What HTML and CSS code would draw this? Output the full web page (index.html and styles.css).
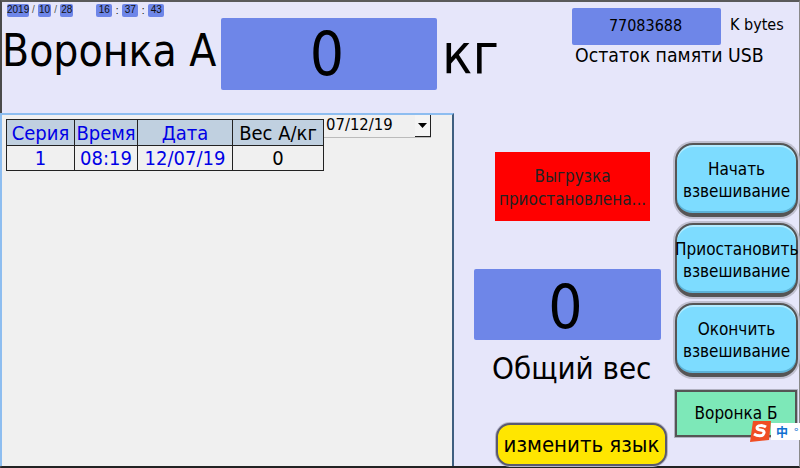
FILE: index.html
```html
<!DOCTYPE html>
<html lang="ru">
<head>
<meta charset="utf-8">
<title>Воронка А</title>
<link rel="stylesheet" href="styles.css">
</head>
<body>
<div class="screen">
  <header class="top">
    <div class="top-left">
      <div class="clock">
        <span class="tick y">2019</span><span class="sep">/</span><span class="tick">10</span><span class="sep">/</span><span class="tick">28</span>
        <span class="tick t1">16</span><span class="sep c">:</span><span class="tick">37</span><span class="sep c">:</span><span class="tick">43</span>
      </div>
      <div class="hopper">
        <span class="hopper-name">Воронка А</span>
        <span class="value-box big">0</span>
        <span class="unit">кг</span>
      </div>
    </div>
    <div class="usb">
      <div class="usb-row"><span class="usb-value">77083688</span><span class="usb-unit">K bytes</span></div>
      <div class="usb-label">Остаток памяти USB</div>
    </div>
  </header>
  <main class="bottom">
    <section class="panel">
      <table class="log">
        <thead>
          <tr><th class="c1">Серия</th><th class="c2">Время</th><th class="c3">Дата</th><th class="c4">Вес А/кг</th></tr>
        </thead>
        <tbody>
          <tr><td>1</td><td>08:19</td><td>12/07/19</td><td class="black">0</td></tr>
        </tbody>
      </table>
      <div class="combo"><span class="combo-text">07/12/19</span><span class="combo-btn"><svg width="9" height="5" viewBox="0 0 9 5"><path d="M0 0h9L4.500 5z" fill="#000"/></svg></span></div>
    </section>
    <section class="status">
      <div class="alert">Выгрузка приостановлена...</div>
      <div class="value-box total">0</div>
      <div class="total-label">Общий вес</div>
      <button class="btn lang">изменить язык</button>
    </section>
    <nav class="actions">
      <button class="btn action">Начать<br>взвешивание</button>
      <button class="btn action wide">Приостановить<br>взвешивание</button>
      <button class="btn action">Окончить<br>взвешивание</button>
      <button class="switch">Воронка Б</button>
    </nav>
  </main>
  <div class="ime">
    <svg class="ime-logo" width="21" height="21" viewBox="0 0 21 21"><path d="M3 0h18l-2 19-19 2z" fill="#f04e23"/><path d="M16 6c-3-2-9-2-9 1s8 1 7 5-7 3-10 1" fill="none" stroke="#fff" stroke-width="3"/></svg>
    <span class="ime-zh">中<span class="ime-dot">°</span></span>
  </div>
</div>
</body>
</html>
```

FILE: styles.css
```css
* { box-sizing: border-box; }
html, body { margin: 0; padding: 0; }
body { width: 800px; height: 468px; overflow: hidden; font-family: "DejaVu Sans", sans-serif; font-stretch: condensed; color: #000; }
.screen { position: relative; width: 800px; height: 468px; background: #e6e6fa; border-top: 2px solid #5a5a5a; border-left: 2px solid #4a4a4a; border-bottom: 2px solid #222; border-right: 1px solid #8a8a8a; display: flex; flex-direction: column; }
.top { height: 111px; display: flex; flex: none; }
.top-left { width: 570px; }
.clock { height: 14px; padding: 2px 0 0 5px; display: flex; align-items: flex-start; font-family: "Liberation Sans", sans-serif; font-stretch: normal; font-size: 10px; line-height: 12px; color: #111; }
.tick { background: #6e86e8; border-radius: 2px; height: 13px; padding: 0 1px; text-align: center; min-width: 11px; }
.tick.y { width: 22px; padding: 0; }
.tick.t1 { margin-left: 23px; }
.tick.t1, .tick.t1 ~ .tick { min-width: 16px; }
.sep { width: 9px; text-align: center; color: #555; }
.sep.c { color: #000; width: 10px; padding-top: 1px; }
.hopper { display: flex; align-items: center; margin-top: 2px; }
.hopper-name { width: 219px; padding-bottom: 7px; font-size: 44px; line-height: 65px; white-space: nowrap; }
.value-box { background: #6e86e8; border-radius: 2px; display: flex; align-items: center; justify-content: center; }
.value-box.big { width: 216px; height: 72px; font-size: 60px; padding: 0 4px 1px 0; }
.unit { font-size: 56px; margin-left: 5px; line-height: 72px; }
.usb { padding: 6px 0 0 0; width: 227px; }
.usb-row { display: flex; align-items: center; }
.usb-value { width: 149px; height: 37px; background: #6e86e8; border-radius: 2px; text-align: center; line-height: 36px; font-size: 16px; padding-right: 2px; }
.usb-unit { margin-left: 9px; font-size: 16px; position: relative; top: -2px; }
.usb-label { font-size: 19.3px; line-height: 22px; margin: 0 0 0 3px; white-space: nowrap; }
.bottom { flex: 1; display: flex; min-height: 0; }
.panel { width: 454px; margin-left: -2px; background: #f0f0f0; border-top: 2px solid #8dbdf0; border-left: 2px solid #8dbdf0; border-right: 2px solid #3f5f80; display: flex; align-items: flex-start; padding: 4px 0 0 4px; height: 100%; flex: none; }
.log { border-collapse: collapse; table-layout: fixed; width: 317px; font-size: 20px; color: #0000e6; }
.log th, .log td { border: 1px solid #222; padding: 0; height: 24px; text-align: center; font-weight: normal; white-space: nowrap; }
.log thead th { background: #c0d0e0; height: 26px; }
.c1 { width: 68px; } .c2 { width: 63px; } .c3 { width: 95px; } .c4 { width: 91px; color: #000; }
.log td.black { color: #000; }
.combo { margin: -4px 0 0 0; width: 107px; height: 23px; background: #f0f0f0; border-bottom: 1px solid #bbb; display: flex; justify-content: space-between; font-size: 16.5px; line-height: 20px; }
.combo-text { padding-left: 2px; }
.combo-btn { width: 16px; height: 22px; background: #f4f4f4; border-right: 1px solid #222; border-bottom: 1px solid #222; display: flex; align-items: center; justify-content: center; }
.status { width: 221px; flex: none; display: flex; flex-direction: column; position: relative; }
.alert { margin: 39px 0 0 41px; width: 155px; height: 70px; background: #ff0000; font-size: 17px; line-height: 23px; text-align: center; padding-top: 13px; color: #222; }
.value-box.total { margin: 48px 0 0 20px; width: 187px; height: 71px; font-size: 60px; padding: 4px 4px 0 0; }
.total-label { margin: 10px 0 0 38px; font-size: 31px; line-height: 36px; white-space: nowrap; }
.btn { font-family: inherit; font-stretch: inherit; padding: 0; color: #000; cursor: pointer; }
.lang { margin: 37px 0 0 42px; width: 171px; height: 43px; background: #ffe600; border: 2px solid #5a5a70; border-radius: 14px; box-shadow: 0 0 0 1px #b4b4c8; font-size: 22px; white-space: nowrap; }
.actions { width: 125px; flex: none; padding-top: 30px; display: flex; flex-direction: column; gap: 6px; }
.action { width: 123px; height: 74px; padding-top: 2px; background: #7ddcff; border: 2px solid #555; border-bottom-width: 4px; border-radius: 18px; box-shadow: 0 0 0 2px #c0c0d0, inset 0 2px 0 #b4ecff, inset 0 -2px 0 #5cb4d8; font-size: 17px; line-height: 22px; white-space: nowrap; overflow: visible; }
.action.wide { text-indent: -2px; }
.switch { margin-top: 7px; width: 122px; height: 47px; background: #7de8b8; border: 2px solid #555; box-shadow: 0 0 0 1px #b0b0c0; font-family: inherit; font-stretch: inherit; font-size: 17px; padding: 0 0 2px; color: #000; }
.ime { position: absolute; right: -1px; top: 419px; width: 50px; height: 21px; display: flex; align-items: center; }
.ime-logo { flex: none; }
.ime-zh { background: #fff; height: 17px; flex: 1; font: bold 12px/17px "Noto Sans CJK SC", sans-serif; color: #1070d0; padding-left: 5px; white-space: nowrap; }
.ime-dot { margin-left: 6px; font-weight: normal; }
```
